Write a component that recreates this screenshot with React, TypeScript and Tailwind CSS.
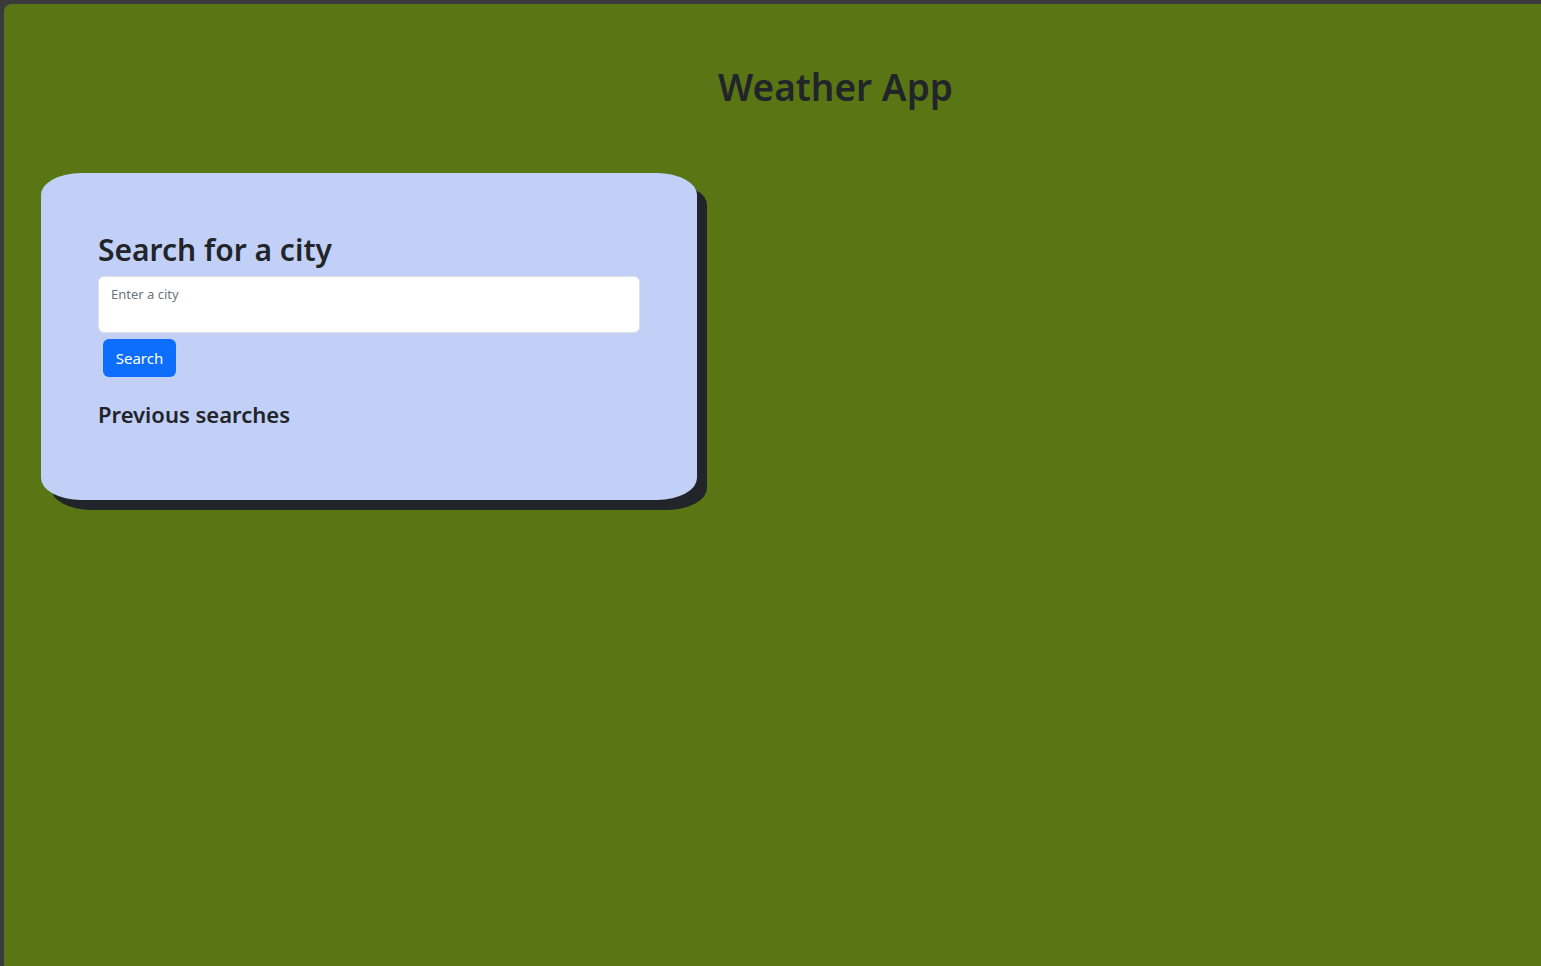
import React, { useState } from 'react';

const App: React.FC = () => {
  const [city, setCity] = useState('');

  return (
    <div className="min-h-screen bg-[#3b3b3b] pt-1 pl-1 font-['Noto_Sans',sans-serif] text-[#212529]">
      <div className="h-[962px] rounded-tl-lg bg-[#5a7614]">
        {/* Header */}
        <header className="pt-[59px] pl-[126px] text-center">
          <h1 className="text-[37px] leading-[48px] font-semibold">Weather App</h1>
        </header>

        {/* Search card */}
        <section className="mt-[62px] ml-[37px] w-[656px] h-[327px] rounded-[40px/22px] bg-[#c2cff6] px-[57px] pt-[58px] shadow-[10px_10px_0_#212529]">
          <h2 className="text-[30px] leading-[38px] font-semibold">Search for a city</h2>
          <textarea
            value={city}
            onChange={(e) => setCity(e.target.value)}
            placeholder="Enter a city"
            className="mt-[7px] block w-[542px] h-[57px] resize-none rounded-[6px] border border-[#dee2e6] bg-white px-3 py-[8px] text-[13px] leading-[18px] placeholder:text-[#6c757d] outline-none"
          />
          <button className="mt-[6px] ml-[5px] h-[38px] w-[73px] rounded-[6px] bg-[#0d6efd] text-[15px] text-white">
            Search
          </button>
          <h4 className="mt-[23px] text-[22px] leading-[29px] font-semibold">Previous searches</h4>
        </section>
      </div>
    </div>
  );
};

export default App;
